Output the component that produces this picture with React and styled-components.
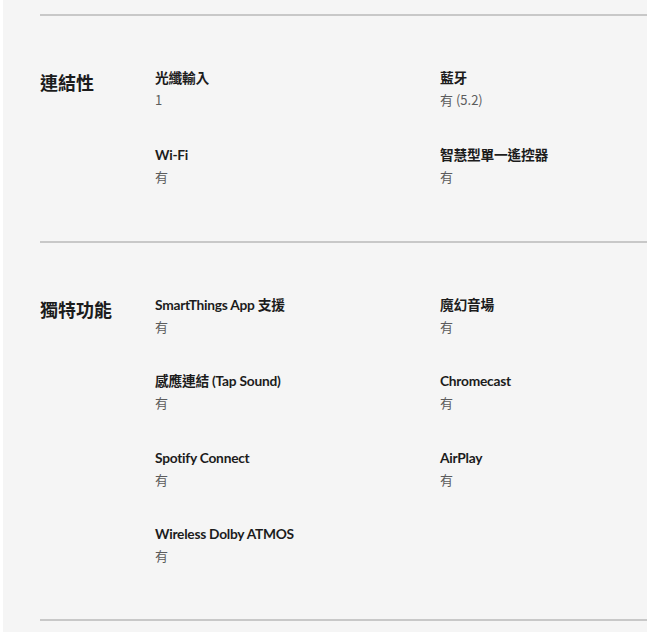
import React from "react";
import styled, {createGlobalStyle} from "styled-components";

const GlobalStyle = createGlobalStyle`
  html, body {
    margin: 0;
    padding: 0;
    background: #ffffff;
  }
  body {
    font-family: "Noto Sans CJK TC", "Noto Sans", sans-serif;
  }
`;

const Page = styled.div`
  width: 650px;
  height: 638px;
  padding: 0 3px 6px 3px;
  box-sizing: border-box;
`;

const Panel = styled.div`
  height: 100%;
  background: #f5f5f5;
  padding: 14px 0 0 37px;
  box-sizing: border-box;
`;

const Section = styled.section`
  display: grid;
  grid-template-columns: 115px 1fr;
  border-top: 2px solid #c8c8c8;
  padding: 51px 0 ${props => props.$last ? "52px" : "53px"};
  ${props => props.$last && `border-bottom: 2px solid #c8c8c8;`}
`;

const Title = styled.h2`
  margin: 0;
  font-size: 18px;
  line-height: 30px;
  font-weight: 700;
  color: #1c1c1c;
`;

const SpecGrid = styled.div`
  display: grid;
  grid-template-columns: 285px 1fr;
  row-gap: 32.5px;
`;

const Spec = styled.div`
  display: flex;
  flex-direction: column;
`;

const Label = styled.div`
  font-family: Lato, "Noto Sans CJK TC", sans-serif;
  font-size: 13.75px;
  line-height: 22px;
  font-weight: 700;
  letter-spacing: -0.25px;
  color: #1c1c1c;
`;

const Value = styled.div`
  font-size: 13px;
  line-height: 22px;
  color: #5c5c5c;
`;

const sections = [
    {
        title: "連結性",
        specs: [
            ["光纖輸入", "1"],
            ["藍牙", "有 (5.2)"],
            ["Wi-Fi", "有"],
            ["智慧型單一遙控器", "有"],
        ],
    },
    {
        title: "獨特功能",
        specs: [
            ["SmartThings App 支援", "有"],
            ["魔幻音場", "有"],
            ["感應連結 (Tap Sound)", "有"],
            ["Chromecast", "有"],
            ["Spotify Connect", "有"],
            ["AirPlay", "有"],
            ["Wireless Dolby ATMOS", "有"],
        ],
    },
];

const App = () => {
    return <Page>
        <GlobalStyle/>
        <Panel>
            {sections.map((section, i) => (
                <Section key={section.title} $last={i === sections.length - 1}>
                    <Title>{section.title}</Title>
                    <SpecGrid>
                        {section.specs.map(([label, value]) => (
                            <Spec key={label}>
                                <Label>{label}</Label>
                                <Value>{value}</Value>
                            </Spec>
                        ))}
                    </SpecGrid>
                </Section>
            ))}
        </Panel>
    </Page>
};

export default App;
